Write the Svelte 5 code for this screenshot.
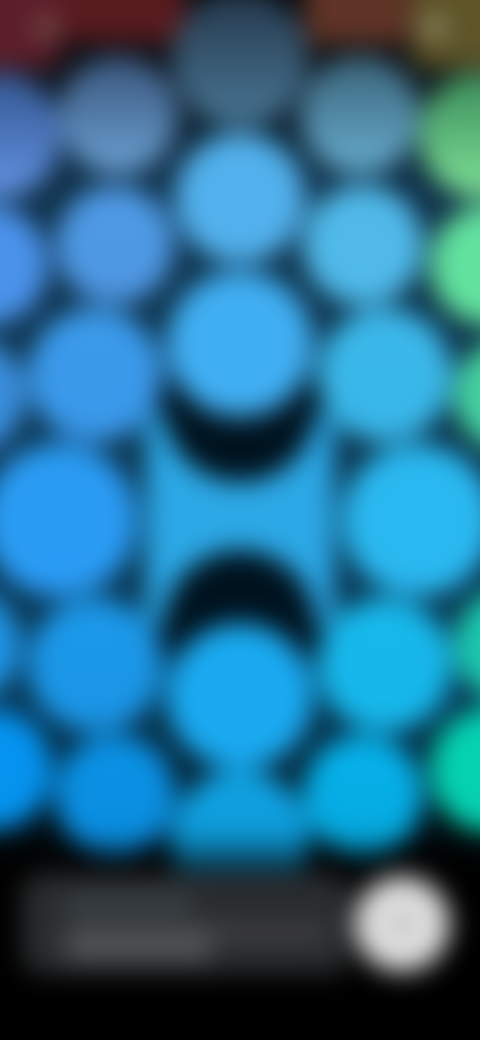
<script>
  // x, y, r, top colour, bottom colour
  const bubbles = [
    [240, 58, 68, "#23364a", "#4a7896"],
    [118, 115, 59, "#38547a", "#6ca2d4"],
    [360, 115, 59, "#3a6278", "#68aed0"],
    [-2, 135, 63, "#33558e", "#6494e6"],
    [482, 135, 63, "#3a8a5a", "#80e498"],
    [240, 198, 65, "#52b0ec", "#52b0ec"],
    [115, 245, 59, "#4e9ae6", "#4e96e0"],
    [363, 245, 60, "#50b8e8", "#50baea"],
    [-12, 265, 60, "#4a92ea", "#4a92ea"],
    [490, 265, 60, "#62e09e", "#62e29e"],
    [95, 375, 67, "#3b9aea", "#3a98ea"],
    [385, 375, 67, "#3cb8ea", "#38b6e8"],
    [-32, 395, 58, "#3a8ede", "#3a8ede"],
    [510, 395, 56, "#46d29e", "#46d2a2"],
    [60, 520, 77, "#2a9bf2", "#2a9bf4"],
    [418, 520, 76, "#2ab8f0", "#2ab8f0"],
    [95, 665, 67, "#1c99ea", "#1a94e4"],
    [385, 665, 67, "#18b8ec", "#16b6ea"],
    [-35, 645, 56, "#2094e4", "#2094e4"],
    [510, 645, 56, "#1cc8ae", "#1cc8ae"],
    [115, 795, 60, "#0a92e6", "#0a8cde"],
    [363, 795, 60, "#06b2ec", "#05a8de"],
    [-8, 770, 60, "#0594f2", "#0592ec"],
    [492, 770, 62, "#05d2b2", "#05d0b0"],
    [240, 840, 70, "#10a4e6", "#0c90ca"]
  ];

  // the top row of cards, cut off by the screen edge
  const strip = [
    [-30, 90, 98, "#5c1e2a"],
    [60, 125, 72, "#581b1e"],
    [305, 105, 74, "#603426"],
    [412, 100, 98, "#5e5428"]
  ];
</script>

<div class="screen">
  <div class="scene">
    <div class="backdrop"></div>

    {#each strip as [x, w, h, c]}
      <div class="tile" style="left:{x}px;width:{w}px;height:{h}px;background:{c}"></div>
    {/each}
    <div class="spot one"></div>
    <div class="spot two"></div>

    <div class="panel"></div>
    <div class="notch top"></div>
    <div class="notch bottom"></div>

    {#each bubbles as [x, y, r, a, b]}
      <div
        class="bubble"
        style="left:{x - r}px;top:{y - r}px;width:{r * 2}px;height:{r * 2}px;background:linear-gradient({a}, {b})"
      ></div>
    {/each}
    <div class="bubble hero one"></div>
    <div class="bubble hero two"></div>

    <div class="fade"></div>

    <div class="dock">
      <div class="field">
        <div class="line short"></div>
        <div class="line long">
          <div class="line-strong"></div>
          <div class="line-weak"></div>
        </div>
      </div>
      <div class="send"><div class="send-dot"></div></div>
    </div>
  </div>
</div>

<style>
  :global(body) {
    margin: 0;
    background: #000;
  }

  .screen {
    position: relative;
    width: 480px;
    height: 1040px;
    overflow: hidden;
    background: #000;
  }

  .scene {
    position: absolute;
    inset: 0;
    filter: blur(13px);
  }

  .backdrop {
    position: absolute;
    left: -60px;
    right: -60px;
    top: -60px;
    bottom: -60px;
    background: linear-gradient(
      #000 0,
      #0b0f14 120px,
      #0f3048 240px,
      #0a3048 500px,
      #063450 760px,
      #041a26 860px,
      #000 920px
    );
  }

  .tile {
    position: absolute;
    top: -30px;
    border-radius: 0 0 12px 12px;
  }

  .spot {
    position: absolute;
    width: 18px;
    height: 18px;
    border-radius: 50%;
  }

  .spot.one {
    left: 38px;
    top: 18px;
    background: #8a7868;
  }

  .spot.two {
    left: 418px;
    top: 18px;
    width: 30px;
    background: #9a9474;
  }

  .panel {
    position: absolute;
    left: 146px;
    top: 415px;
    width: 188px;
    height: 210px;
    background: #2ca8e6;
  }

  .notch {
    position: absolute;
    left: 164px;
    width: 152px;
    height: 152px;
    border-radius: 50%;
    background: #00121e;
  }

  .notch.top {
    top: 330px;
  }

  .notch.bottom {
    top: 550px;
  }

  .bubble {
    position: absolute;
    border-radius: 50%;
  }

  .hero {
    left: 167px;
    width: 146px;
    height: 146px;
  }

  .hero.one {
    top: 271px;
    background: #40aef2;
  }

  .hero.two {
    top: 623px;
    background: #1aa9f0;
  }

  .fade {
    position: absolute;
    left: -60px;
    right: -60px;
    top: 835px;
    height: 50px;
    background: linear-gradient(rgba(0, 0, 0, 0), #000);
  }

  .dock {
    position: absolute;
    left: 22px;
    right: 30px;
    top: 874px;
    display: flex;
    align-items: center;
    gap: 4px;
  }

  .field {
    flex: 1;
    height: 100px;
    box-sizing: border-box;
    padding: 20px 18px 0 44px;
    border-radius: 20px;
    background: #2a2c2e;
    display: flex;
    flex-direction: column;
    gap: 12px;
  }

  .line.short {
    width: 125px;
    height: 20px;
    background: #3a444a;
  }

  .line.long {
    display: flex;
    gap: 0;
  }

  .line-strong {
    width: 145px;
    height: 36px;
    background: #505254;
  }

  .line-weak {
    width: 115px;
    height: 14px;
    background: #464546;
  }

  .send {
    width: 96px;
    height: 96px;
    flex: none;
    border-radius: 50%;
    background: #dedede;
    display: flex;
    align-items: center;
    justify-content: center;
  }

  .send-dot {
    width: 18px;
    height: 18px;
    border-radius: 50%;
    background: #b0b0b0;
  }
</style>
